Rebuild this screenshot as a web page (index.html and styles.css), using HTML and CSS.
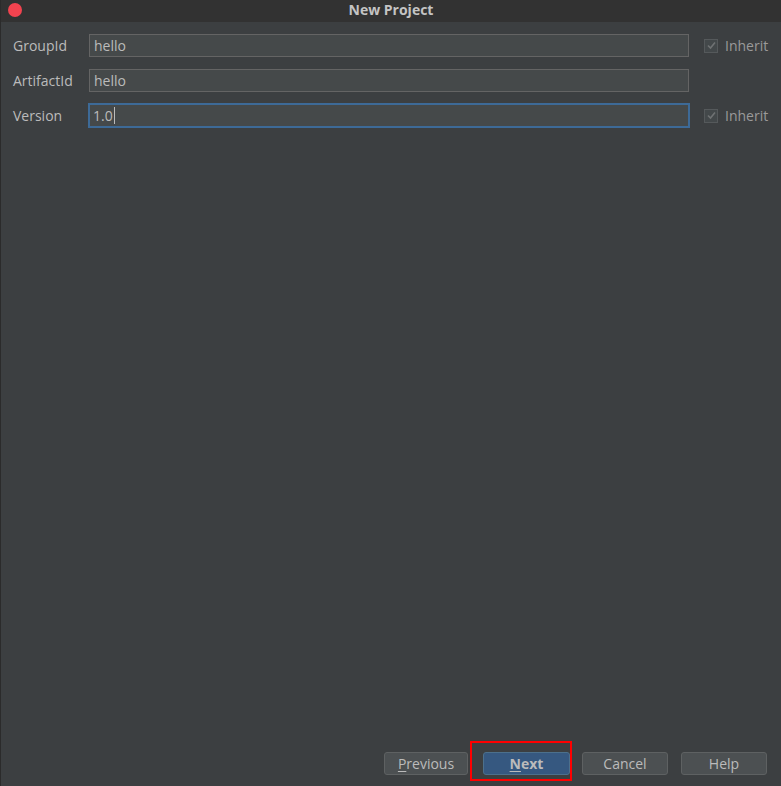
FILE: index.html
```
<!DOCTYPE html>
<html lang="en">
<head>
    <meta charset="UTF-8">
    <title>New Project</title>
    <link rel="stylesheet" href="styles.css">
</head>
<body>
    <div class="window">
        <div class="titlebar">
            <span class="close-dot"></span>
            <span class="title">New Project</span>
        </div>
        <div class="form">
            <div class="row">
                <label>GroupId</label>
                <div class="field">hello</div>
                <div class="inherit">
                    <span class="check"><svg width="11" height="11" viewBox="0 0 11 11"><path d="M2 5.5 L4.5 8 L9 2.5" fill="none" stroke="#6f7273" stroke-width="1.6"/></svg></span>
                    Inherit
                </div>
            </div>
            <div class="row">
                <label>ArtifactId</label>
                <div class="field">hello</div>
            </div>
            <div class="row">
                <label>Version</label>
                <div class="field focused">1.0<span class="caret"></span></div>
                <div class="inherit">
                    <span class="check"><svg width="11" height="11" viewBox="0 0 11 11"><path d="M2 5.5 L4.5 8 L9 2.5" fill="none" stroke="#6f7273" stroke-width="1.6"/></svg></span>
                    Inherit
                </div>
            </div>
        </div>
        <div class="footer">
            <button class="btn narrow"><u>P</u>revious</button>
            <div class="marked">
                <button class="btn primary"><u>N</u>ext</button>
                <span class="highlight"></span>
            </div>
            <button class="btn">Cancel</button>
            <button class="btn last">Help</button>
        </div>
    </div>
</body>
</html>
```

FILE: styles.css
```
body {
    margin: 0;
    padding: 0;
    font-family: "Open Sans", "Noto Sans", sans-serif;
    font-size: 14px;
    color: #bbbbbb;
    background-color: #3c3f41;
}
.window {
    height: 786px;
    display: flex;
    flex-direction: column;
    border-left: 1px solid #2b2b2b;
}
.titlebar {
    height: 22px;
    background-color: #323232;
    display: flex;
    align-items: center;
    justify-content: center;
    position: relative;
}
.close-dot {
    position: absolute;
    left: 7px;
    top: 3px;
    width: 14px;
    height: 14px;
    border-radius: 50%;
    background-color: #f2434f;
}
.title {
    font-weight: bold;
    color: #c4c4c4;
    font-size: 14px;
    padding-bottom: 3px;
}
.form {
    padding-top: 12px;
    display: flex;
    flex-direction: column;
    gap: 12px;
}
.row {
    display: flex;
    align-items: center;
    height: 23px;
}
.row label {
    width: 76px;
    padding-left: 12px;
}
.field {
    width: 594px;
    height: 21px;
    line-height: 21px;
    padding-left: 4px;
    border: 1px solid #646464;
    background-color: #45494a;
    display: flex;
    align-items: center;
}
.field.focused {
    border: 2px solid #3d6a97;
    width: 595px;
    height: 21px;
    padding-left: 3px;
    margin-left: -1px;
}
.caret {
    display: inline-block;
    width: 1px;
    height: 17px;
    background-color: #bbbbbb;
    margin-left: 1px;
}
.inherit {
    margin-left: 15px;
    display: flex;
    align-items: center;
    gap: 7px;
    color: #9a9a9a;
}
.field.focused + .inherit { margin-left: 14px; }
.check {
    width: 12px;
    height: 12px;
    border: 1px solid #55595b;
    background-color: #43484a;
    display: flex;
    align-items: center;
    justify-content: center;
}
.footer {
    margin-top: auto;
    display: flex;
    justify-content: flex-end;
    align-items: center;
    gap: 12px;
    padding: 0 14px 11px 0;
}
.btn {
    font-family: inherit;
    font-size: 14px;
    color: #bbbbbb;
    background-color: #4c5052;
    border: 1px solid #5e6162;
    border-radius: 3px;
    height: 23px;
    width: 86px;
    padding: 0;
}
.btn.narrow { width: 84px; }
.btn.last { margin-left: 1px; }
.btn u { text-decoration-thickness: 1px; text-underline-offset: 2px; }
.btn.primary {
    background-color: #365880;
    border-color: #4c708c;
    font-weight: bold;
    width: 87px;
}
.marked {
    position: relative;
    margin-left: 3px;
    display: flex;
}
.highlight {
    position: absolute;
    left: -13px;
    right: -2px;
    top: -11px;
    bottom: -6px;
    border: 2px solid #ff0000;
}
```
